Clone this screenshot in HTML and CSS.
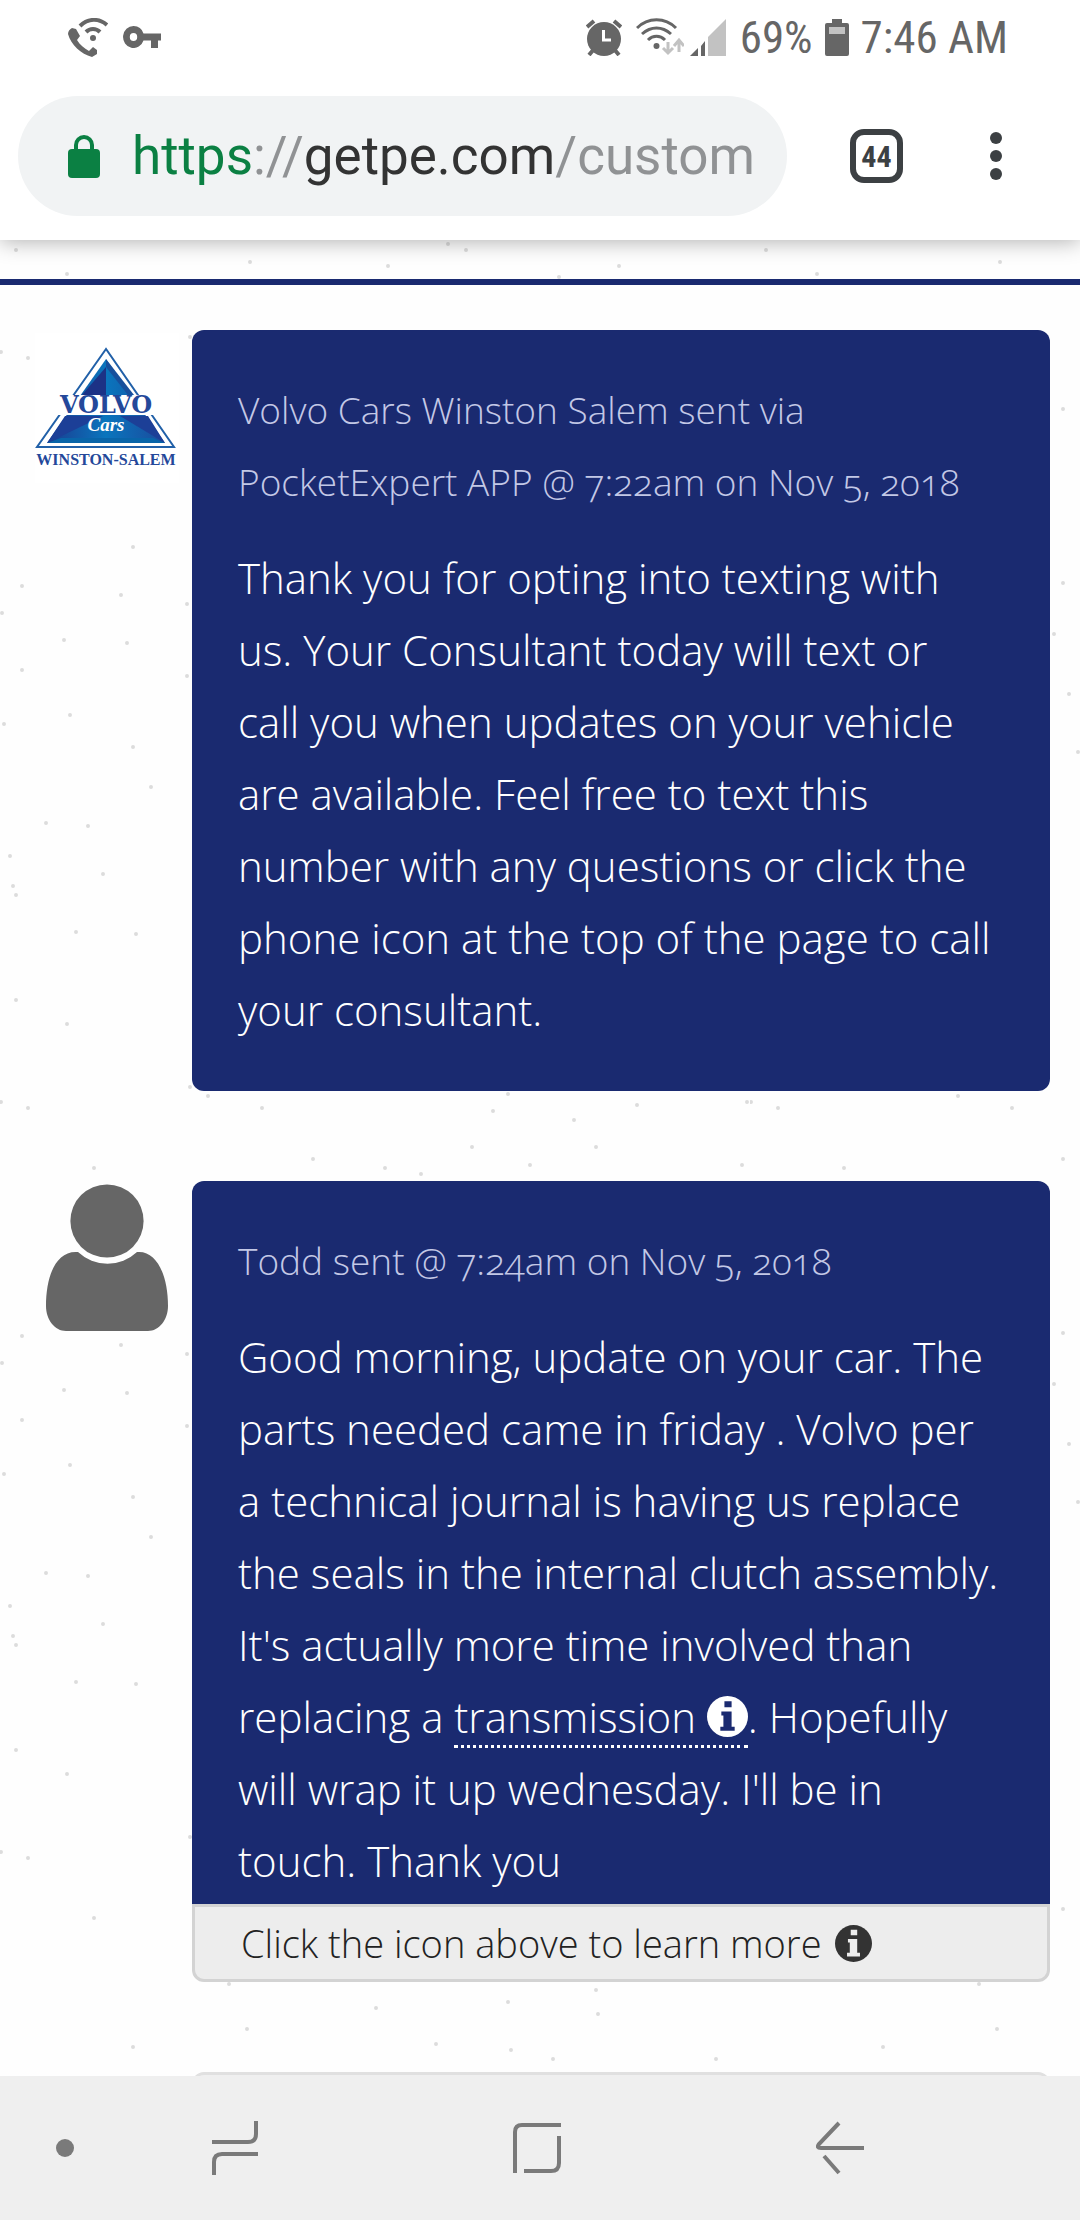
FILE: index.html
```
<!DOCTYPE html>
<html lang="en">
<head>
    <meta charset="UTF-8">
    <meta name="viewport" content="width=device-width, initial-scale=1.0">
    <title>Messages</title>
    <link rel="stylesheet" href="styles.css">
</head>
<body>
    <header class="header">
        <div class="status-bar">
            <svg class="icon-call" width="40" height="39" viewBox="0 0 40 39" aria-hidden="true">
                <path d="M4 10l4 1 4 7-3 4c3 5 7 8 12 11l4-4 4 3 0 4-5 3C13 36 3 27 0 16c0-3 2-5 4-6z" fill="#666"/>
                <path d="M12 8C20 0 31 0 39 7M18 14c4-4 10-4 14 0" fill="none" stroke="#666" stroke-width="4"/>
                <circle cx="25" cy="20" r="3" fill="#666"/>
            </svg>
            <svg width="38" height="22" viewBox="0 0 38 22" aria-hidden="true">
                <path d="M10.500 0a10.500 11 0 0 1 10 7.500H38v7h-3V22h-7v-7.500h-7.500A10.500 11 0 1 1 10.500 0zm0 7a3.700 4 0 1 0 0 8 3.700 4 0 1 0 0-8z" fill="#666"/>
            </svg>
            <div class="status-right">
                <svg class="icon-alarm" width="36" height="37" viewBox="0 0 36 37" aria-hidden="true">
                    <circle cx="18" cy="20" r="17" fill="#666"/>
                    <path d="M1 8l7-6M35 8l-7-6M3 36l5-6M33 36l-5-6" stroke="#666" stroke-width="4"/>
                    <path d="M17.500 11v10H25" fill="none" stroke="#fff" stroke-width="3"/>
                </svg>
                <svg class="icon-wifi" width="48" height="38" viewBox="0 0 48 38" aria-hidden="true">
                    <path d="M1 10C12-1 29-1 40 10M6 16c9-8 20-8 29 0M12 22c5-5 12-5 17 0" fill="none" stroke="#666" stroke-width="3"/>
                    <circle cx="20.500" cy="28" r="3" fill="#666"/>
                    <path d="M32 24v11M27 30l5 5 5-5M43 34V23M38 28l5-6 5 6" fill="none" stroke="#c2c2c2" stroke-width="3"/>
                </svg>
                <svg class="icon-signal" width="36" height="37" viewBox="0 0 36 37" aria-hidden="true">
                    <path d="M0 37l8-8v8zM11 27l4-5v15h-4z" fill="#666"/>
                    <path d="M18 18L36 0v37H18z" fill="#c2c2c2"/>
                </svg>
                <span class="battery-level">69%</span>
                <svg class="icon-battery" width="24" height="37" viewBox="0 0 24 37" aria-hidden="true">
                    <path d="M7 0h10v4h5a2 2 0 0 1 2 2v29a2 2 0 0 1-2 2H2a2 2 0 0 1-2-2V6a2 2 0 0 1 2-2h5z" fill="#666"/>
                    <path d="M4 8h16v7H4z" fill="#c2c2c2"/>
                </svg>
                <span>7:46 AM</span>
            </div>
        </div>
        <div class="toolbar">
            <div class="address">
                <svg width="32" height="43" viewBox="0 0 32 43" aria-hidden="true">
                    <rect y="14" width="32" height="29" rx="4" fill="#0b8043"/>
                    <path d="M8 16v-6a8 8 0 0 1 16 0v6" fill="none" stroke="#0b8043" stroke-width="4"/>
                </svg>
                <a class="url" href="#"><span class="scheme">https</span>://<span class="host">getpe.com</span>/custom</a>
            </div>
            <button class="tabs" aria-label="Open tabs">44</button>
            <button class="menu" aria-label="Menu">
                <svg width="12" height="48" viewBox="0 0 12 48">
                    <g fill="#3c4043"><circle cx="6" cy="6" r="6"/><circle cx="6" cy="24" r="6"/><circle cx="6" cy="42" r="6"/></g>
                </svg>
            </button>
        </div>
    </header>

    <main class="content">
        <div class="top-strip"></div>
        <div class="messages">
            <article class="message">
                <div class="avatar">
                    <svg class="logo" width="144" height="150" viewBox="0 0 144 150" role="img" aria-label="Volvo Cars Winston-Salem">
                        <defs>
                            <linearGradient id="blue" x1="0" x2="1">
                                <stop offset="0" stop-color="#1b3b8f"/>
                                <stop offset="0.500" stop-color="#0a75bd"/>
                                <stop offset="1" stop-color="#1b4a9c"/>
                            </linearGradient>
                        </defs>
                        <rect width="144" height="150" fill="#fff"/>
                        <path d="M71 16L2 114h137z" fill="none" stroke="#2160a8" stroke-width="2"/>
                        <path d="M71 26L12 110h118z" fill="url(#blue)"/>
                        <path d="M71 34v28H47z" fill="#1c3286"/>
                        <path d="M71 26l28 36h-6L71 34z" fill="#174f9c"/>
                        <path d="M30 83l38 0-56 27zM85 83h28l17 27z" fill="#1c3f97"/>
                        <path d="M12 110l14-5h92l12 5z" fill="#0965a9"/>
                        <path d="M14 62h116v20H14z" fill="#fff"/>
                        <text class="logo-name" x="71" y="80">VOLVO</text>
                        <text class="logo-cars" x="71" y="98">Cars</text>
                        <text class="logo-city" x="71" y="132">WINSTON-SALEM</text>
                    </svg>
                </div>
                <div class="bubble">
                    <p class="meta">Volvo Cars Winston Salem sent via PocketExpert APP @ 7:22am on Nov 5, 2018</p>
                    <p class="text">Thank you for opting into texting with us. Your Consultant today will text or<br>call you when updates on your vehicle are available. Feel free to text this number with any questions or click the phone icon at the top of the page to call your consultant.</p>
                </div>
            </article>

            <article class="message">
                <div class="avatar">
                    <svg width="122" height="148" viewBox="0 0 122 148" role="img" aria-label="Todd">
                        <g fill="#666">
                            <circle cx="61" cy="37" r="36.600"/>
                            <path d="M32 68C10 66 0 92 0 122c0 14 9 25 20 25h82c11 0 20-11 20-25 0-30-11-56-31-54A43 43 0 0 1 32 68z"/>
                        </g>
                    </svg>
                </div>
                <div class="thread">
                    <div class="bubble bubble-open">
                        <p class="meta">Todd sent @ 7:24am on Nov 5, 2018</p>
                        <p class="text">Good morning, update on your car. The parts needed came in friday . Volvo per a technical journal is having us replace the seals in the internal clutch assembly. It's actually more time involved than replacing a <a class="term" href="#">transmission <svg class="info" viewBox="0 0 40 40" aria-hidden="true"><circle cx="20" cy="20" r="20" fill="#fff"/><path d="M17 5h7v6h-7zM14 15h10v15h3v4H13v-4h3V19h-2z" fill="#1a2a70"/></svg></a>. Hopefully will wrap it up wednesday. I'll be in touch. Thank you</p>
                    </div>
                    <div class="note">Click the icon above to learn more <svg class="info info-small" viewBox="0 0 40 40" aria-hidden="true"><circle cx="20" cy="20" r="20" fill="#333"/><path d="M17 5h7v6h-7zM14 15h10v15h3v4H13v-4h3V19h-2z" fill="#ededed"/></svg></div>
                </div>
            </article>

            <article class="message">
                <div class="avatar"></div>
                <div class="bubble bubble-light"></div>
            </article>
        </div>
    </main>

    <nav class="nav-bar">
        <button aria-label="Hide bar">
            <svg width="18" height="18" viewBox="0 0 18 18"><circle cx="9" cy="9" r="9" fill="#7a7a7a"/></svg>
        </button>
        <button aria-label="Recent apps">
            <svg width="46" height="54" viewBox="0 0 46 54"><path d="M0 21h36q8 0 8-8V0M46 33H10q-8 0-8 8v13"/></svg>
        </button>
        <button aria-label="Home">
            <svg width="48" height="50" viewBox="0 0 48 50"><path d="M2 50V9q0-7 7-7h39M46 13v27q0 8-8 8H11"/></svg>
        </button>
        <button aria-label="Back">
            <svg width="48" height="54" viewBox="0 0 48 54"><path d="M23 2L3 23q-3 4 2 4h43M8 35l15 17"/></svg>
        </button>
    </nav>
</body>
</html>
```
FILE: styles.css
```
* {
    box-sizing: border-box;
}

body {
    display: flex;
    flex-direction: column;
    height: 100vh;
    margin: 0;
    font-family: "Open Sans", sans-serif;
    font-weight: 300;
    background-color: #fefefe;
    /* speckled paper tile */
    background-image: url("data:image/svg+xml,%3Csvg xmlns='http://www.w3.org/2000/svg' width='750' height='750'%3E%3Cpath fill='none' stroke='%23dcdcdc' stroke-width='4' stroke-linecap='round' d='M16 250h0M67 274h0M250 262h0M388 266h0M448 244h0M466 250h0M619 266h0M559 277h0M28 358h0M190 337h0M1 352h0M133 547h0M22 586h0M121 595h0M187 604h0M2 613h0M64 640h0M127 643h0M22 670h0M187 676h0M70 715h0M4 724h0M133 747h0M151 37h0M46 73h0M88 76h0M10 106h0M103 124h0M13 136h0M16 145h0M76 182h0M136 184h0M208 346h0M262 358h0M493 361h0M508 344h0M574 370h0M637 355h0M747 352h0M472 397h0M596 397h0M313 409h0M385 418h0M421 424h0M530 415h0M742 415h0M94 418h0M229 484h0M596 490h0M508 502h0M376 508h0M598 514h0M247 529h0M436 544h0M511 550h0M553 559h0M716 559h0M313 583h0M304 634h0M319 694h0M328 2h0'/%3E%3C/svg%3E");
}

button {
    padding: 0;
    border: none;
    background: none;
    cursor: pointer;
}

svg {
    flex-shrink: 0;
}

.header {
    position: relative;
    flex-shrink: 0;
    background-color: #fff;
    box-shadow: 0 2px 20px rgba(0, 0, 0, 0.3);
    font-family: Roboto, sans-serif;
    font-weight: 400;
}

.status-bar {
    display: flex;
    align-items: center;
    gap: 15px;
    height: 74px;
    padding: 0 72px 0 68px;
    font-family: "Roboto Condensed", Roboto, sans-serif;
    font-size: 45px;
    color: #666;
}

.status-right {
    display: flex;
    align-items: center;
    margin-left: auto;
}

.icon-alarm {
    margin-right: 14px;
}

.icon-wifi {
    margin-right: 6px;
}

.icon-signal {
    margin-right: 14px;
}

.icon-battery {
    margin: 0 12px;
}

.toolbar {
    display: flex;
    align-items: center;
    padding: 22px 78px 24px 18px;
}

.address {
    display: flex;
    flex: 1;
    align-items: center;
    gap: 32px;
    height: 120px;
    margin-right: 63px;
    padding: 0 32px 0 50px;
    border-radius: 60px;
    background-color: #f1f3f4;
}

.url {
    font-size: 53px;
    color: #909294;
    text-decoration: none;
    white-space: nowrap;
}

.scheme {
    color: #0b8043;
}

.host {
    color: #333;
}

.tabs {
    width: 54px;
    height: 54px;
    margin-right: 87px;
    border: 6px solid #3c4043;
    border-radius: 14px;
    font: 700 30px "Roboto Condensed", Roboto, sans-serif;
    color: #3c4043;
}

.menu {
    display: flex;
}

.content {
    flex: 1;
    min-height: 0;
    overflow: hidden;
}

.top-strip {
    height: 45px;
    border-bottom: 6px solid #1a2a70;
}

.messages {
    display: flex;
    flex-direction: column;
    gap: 90px;
    padding: 45px 30px 0 22px;
}

.message {
    display: flex;
    align-items: flex-start;
}

.avatar {
    display: flex;
    flex-shrink: 0;
    justify-content: center;
    width: 170px;
    padding-top: 3px;
}

.logo-name,
.logo-cars,
.logo-city {
    font-family: "Liberation Serif", serif;
    font-weight: 700;
    text-anchor: middle;
    fill: #24489a;
}

.logo-name {
    font-family: "DejaVu Serif", serif;
    font-size: 24px;
}

.logo-cars {
    font-size: 19px;
    font-style: italic;
    fill: #fff;
}

.logo-city {
    font-size: 16px;
}

.thread {
    flex: 1;
}

.bubble {
    flex: 1;
    padding: 44px 48px 45px 46px;
    border-radius: 12px;
    background-color: #1a2a70;
    color: #fff;
}

.bubble-open {
    padding-bottom: 7px;
    border-radius: 12px 12px 0 0;
}

.bubble-light {
    height: 200px;
    border: 3px solid #e0e0e0;
    background-color: #efefef;
}

.meta {
    margin: 0 0 24px;
    font-size: 37px;
    line-height: 72px;
    font-variant-numeric: oldstyle-nums;
    color: #c3c8e6;
}

.text {
    margin: 0;
    font-size: 42px;
    line-height: 72px;
}

.term {
    border-bottom: 3px dotted #fff;
    color: inherit;
    text-decoration: none;
    white-space: nowrap;
}

.info {
    width: 41px;
    height: 41px;
    vertical-align: -4px;
}

.info-small {
    width: 37px;
    height: 37px;
    margin-left: 4px;
}

.note {
    padding: 0 46px;
    border: 3px solid #d3d3d3;
    border-radius: 0 0 12px 12px;
    background-color: #ededed;
    font-size: 38px;
    line-height: 72px;
    color: #222;
}

.nav-bar {
    position: relative;
    display: grid;
    flex-shrink: 0;
    grid-template-columns: 38px repeat(3, 1fr);
    height: 144px;
    padding: 0 89px 0 46px;
    background-color: #efefef;
}

.nav-bar button {
    display: flex;
    align-items: center;
    justify-content: center;
}

.nav-bar path {
    fill: none;
    stroke: #7a7a7a;
    stroke-width: 4;
}
```
